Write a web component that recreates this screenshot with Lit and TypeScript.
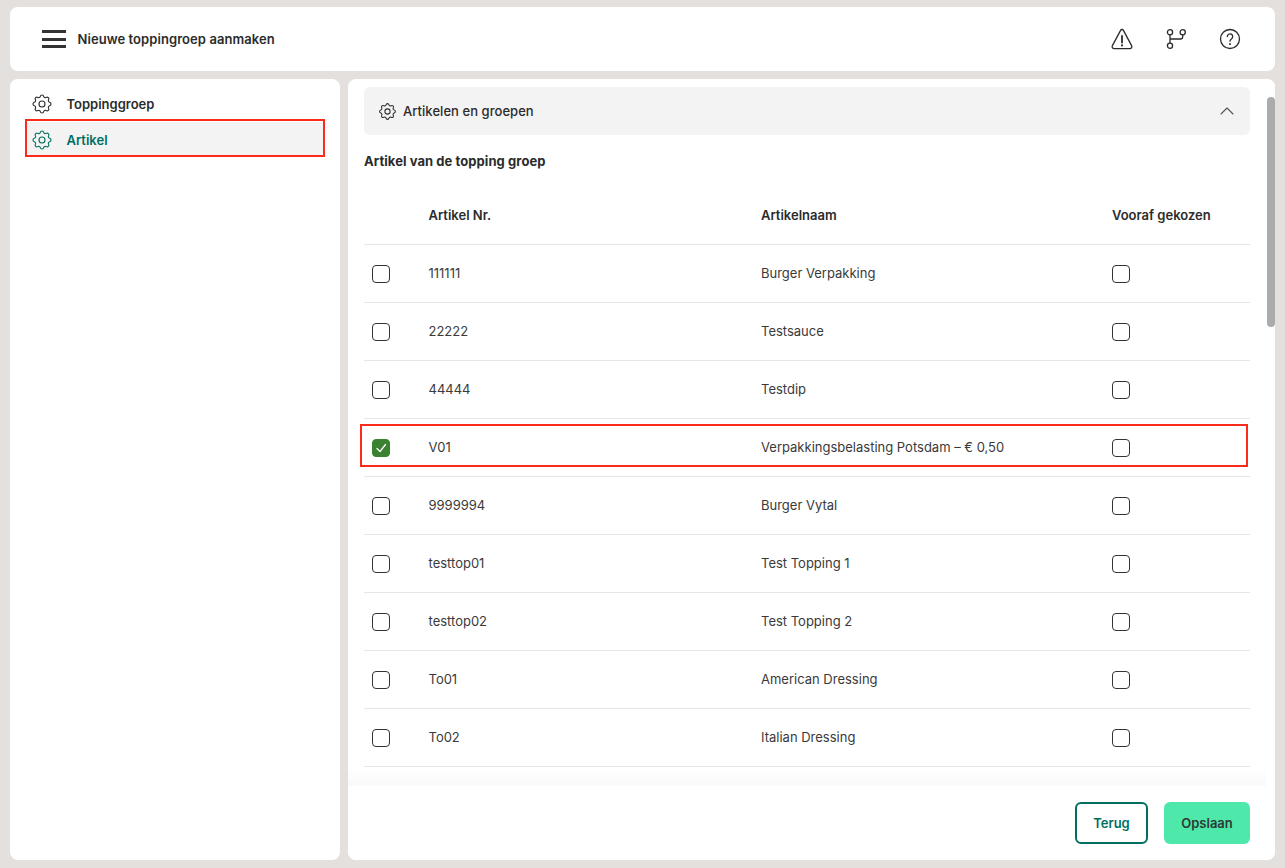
import { LitElement, html, css, svg } from "lit";
import { customElement } from "lit/decorators.js";

const rows = [
  ["111111", "Burger Verpakking"],
  ["22222", "Testsauce"],
  ["44444", "Testdip"],
  ["V01", "Verpakkingsbelasting Potsdam – € 0,50"],
  ["9999994", "Burger Vytal"],
  ["testtop01", "Test Topping 1"],
  ["testtop02", "Test Topping 2"],
  ["To01", "American Dressing"],
  ["To02", "Italian Dressing"],
];

const gear = svg`<path d="M10.325 4.317c.426-1.756 2.924-1.756 3.35 0a1.724 1.724 0 0 0 2.573 1.066c1.543-.94 3.31.826 2.37 2.37a1.724 1.724 0 0 0 1.065 2.572c1.756.426 1.756 2.924 0 3.35a1.724 1.724 0 0 0-1.066 2.573c.94 1.543-.826 3.31-2.37 2.37a1.724 1.724 0 0 0-2.572 1.065c-.426 1.756-2.924 1.756-3.35 0a1.724 1.724 0 0 0-2.573-1.066c-1.543.94-3.31-.826-2.37-2.37a1.724 1.724 0 0 0-1.065-2.572c-1.756-.426-1.756-2.924 0-3.35a1.724 1.724 0 0 0 1.066-2.573c-.94-1.543.826-3.31 2.37-2.37 1 .608 2.296.07 2.572-1.065z"/><circle cx="12" cy="12" r="3"/>`;

@customElement("app-root")
export class AppRoot extends LitElement {
  static styles = css`
    :host {
      display: block;
      height: 868px;
      background: #e3e0de;
      font-family: Inter, "Liberation Sans", sans-serif;
      color: #2b2b2b;
      overflow: hidden;
    }
    svg {
      fill: none;
      stroke: currentColor;
      stroke-linecap: round;
      stroke-linejoin: round;
      display: block;
      flex: none;
    }
    .page {
      height: 868px;
      box-sizing: border-box;
      padding: 7px 10px 8px;
      display: flex;
      flex-direction: column;
      gap: 8px;
    }
    .topbar {
      height: 64px;
      flex: none;
      background: #fff;
      border-radius: 8px;
      display: flex;
      align-items: center;
      padding: 0 32px;
      box-sizing: border-box;
    }
    .burger {
      width: 24px;
      height: 18px;
      display: flex;
      flex-direction: column;
      justify-content: space-between;
      margin-right: 12px;
    }
    .burger span {
      height: 3px;
      background: #333;
    }
    .title {
      font-size: 13px;
      font-weight: 600;
      letter-spacing: 0.07px;
      margin-left: -0.5px;
      flex: 1;
    }
    .actions {
      display: flex;
      gap: 30px;
      margin-right: 1px;
    }
    .actions svg {
      width: 24px;
      height: 24px;
      stroke-width: 1.3;
    }
    .body {
      flex: 1;
      min-height: 0;
      display: flex;
      gap: 8px;
    }
    .side {
      width: 330px;
      flex: none;
      background: #fff;
      border-radius: 8px;
      box-sizing: border-box;
      padding: 7px 17px;
      display: flex;
      flex-direction: column;
      gap: 3px;
    }
    .nav {
      height: 33px;
      box-sizing: border-box;
      padding: 2px 0 0 3px;
      display: flex;
      align-items: center;
      gap: 12.5px;
      font-size: 13px;
      font-weight: 600;
      border-radius: 3px;
      position: relative;
    }
    .nav svg {
      width: 24px;
      height: 24px;
      stroke-width: 1.1;
    }
    .nav.active {
      background: #f3f3f3;
      color: #006f5f;
    }
    .nav.active::after {
      content: "";
      position: absolute;
      inset: -3px -2px -2px -2px;
      border: 2px solid #fb2a1a;
    }
    .main {
      flex: 1;
      min-width: 0;
      background: #fff;
      border-radius: 8px;
      display: flex;
      flex-direction: column;
      overflow: hidden;
      position: relative;
    }
    .scroll {
      flex: 1;
      min-height: 0;
      overflow: hidden;
      padding: 8px 25px 0 16px;
      position: relative;
    }
    .scroll::after {
      content: "";
      position: absolute;
      left: 0;
      right: 9px;
      bottom: 0;
      height: 18px;
      background: linear-gradient(rgba(255, 255, 255, 0), rgba(245, 245, 245, 0.6));
    }
    .bar {
      position: absolute;
      top: 0;
      right: 0;
      bottom: 0;
      width: 9px;
      background: #fff;
    }
    .thumb {
      margin-top: 18px;
      height: 230px;
      width: 8px;
      margin-left: 1px;
      border-radius: 4px;
      background: #ababab;
    }
    .accordion {
      height: 48px;
      background: #f3f3f3;
      border-radius: 6px;
      display: flex;
      align-items: center;
      padding: 0 16px 0 13px;
      gap: 5px;
      font-size: 13px;
      font-weight: 500;
      letter-spacing: 0.05px;
    }
    .accordion svg.cog {
      width: 21px;
      height: 21px;
      stroke-width: 1.2;
    }
    .accordion span {
      flex: 1;
    }
    .accordion svg.chev {
      width: 14px;
      height: 14px;
      stroke: #555;
      stroke-width: 1.1;
    }
    h3 {
      margin: 18px 0 0;
      font-size: 13px;
      line-height: 16px;
      font-weight: 700;
      letter-spacing: 0.07px;
    }
    .row {
      display: grid;
      grid-template-columns: 64.5px 332.5px 351px 1fr;
      align-items: center;
      height: 58px;
      box-sizing: border-box;
      border-bottom: 1px solid #e6e6e6;
      font-size: 13px;
      position: relative;
      color: #3a3a3a;
    }
    .row.head {
      margin-top: 18px;
      font-weight: 600;
      color: #2b2b2b;
    }
    .cell {
      padding-bottom: 2px;
    }
    .box {
      width: 18px;
      height: 18px;
      box-sizing: border-box;
      border: 1.5px solid #333;
      border-radius: 4px;
      margin-left: 8px;
      background: #fff;
    }
    .cols .box {
      margin-left: 0;
    }
    .box.checked {
      background: #3a8230;
      border-color: #3a8230;
      display: flex;
      align-items: center;
      justify-content: center;
    }
    .box.checked svg {
      width: 12px;
      height: 12px;
      stroke: #fff;
      stroke-width: 1.3;
    }
    .mark {
      position: absolute;
      left: -4px;
      right: 2px;
      top: 5px;
      bottom: 9px;
      border: 2px solid #fb2a1a;
      pointer-events: none;
    }
    .foot {
      height: 74px;
      flex: none;
      background: #fff;
      display: flex;
      justify-content: flex-end;
      align-items: flex-start;
      gap: 16px;
      padding: 16px 25px 0 0;
      box-sizing: border-box;
    }
    button {
      height: 42px;
      border-radius: 6px;
      font: 600 13px Inter, "Liberation Sans", sans-serif;
      padding: 0;
      box-sizing: border-box;
    }
    .back {
      width: 73px;
      background: #fff;
      color: #006f5f;
      border: 2px solid #006f5f;
    }
    .save {
      width: 86px;
      background: #4fe8ab;
      color: #2b3a35;
      border: none;
    }
  `;

  render() {
    return html`
      <div class="page">
        <header class="topbar">
          <div class="burger"><span></span><span></span><span></span></div>
          <div class="title">Nieuwe toppingroep aanmaken</div>
          <div class="actions">
            <svg viewBox="0 0 24 24">
              <path d="M10.6 3.4 2.4 18.6c-.8 1.500.2 3 1.800 3h15.600c1.600 0 2.600-1.500 1.800-3L13.400 3.400c-.6-1.200-2.200-1.200-2.800 0z" />
              <path d="M12 9v6.500" stroke-width="1.800" />
              <path d="M12 18.300v.2" stroke-width="2" />
            </svg>
            <svg viewBox="0 0 24 24">
              <circle cx="6" cy="5.200" r="2.600" />
              <circle cx="18.700" cy="5.200" r="2.600" />
              <circle cx="6" cy="18.700" r="2.600" />
              <path d="M6 7.800v8.300M6 12h10.500c1.300 0 2.200-.9 2.200-2.200v-2" />
            </svg>
            <svg viewBox="0 0 24 24">
              <circle cx="12" cy="12" r="9.500" />
              <path d="M9.300 9.500a2.700 2.700 0 1 1 4.300 2.200c-1 .7-1.600 1.200-1.600 2.500" />
              <path d="M12 17v.2" stroke-width="1.800" />
            </svg>
          </div>
        </header>
        <div class="body">
          <nav class="side">
            <div class="nav"><svg viewBox="0 0 24 24">${gear}</svg>Toppinggroep</div>
            <div class="nav active"><svg viewBox="0 0 24 24">${gear}</svg>Artikel</div>
          </nav>
          <main class="main">
            <div class="scroll">
              <div class="accordion">
                <svg class="cog" viewBox="0 0 24 24">${gear}</svg>
                <span>Artikelen en groepen</span>
                <svg class="chev" viewBox="0 0 14 14"><path d="M1 10l6-6 6 6" /></svg>
              </div>
              <h3>Artikel van de topping groep</h3>
              <div class="row head">
                <div></div>
                <div class="cell">Artikel Nr.</div>
                <div class="cell">Artikelnaam</div>
                <div class="cell">Vooraf gekozen</div>
              </div>
              ${rows.map(
                ([nr, name]) => html`
                  <div class="row">
                    ${nr === "V01"
                      ? html`<div class="box checked">
                            <svg viewBox="0 0 12 12"><path d="M2 6.500 5 9.500l5.500-7" /></svg>
                          </div>
                          <div class="mark"></div>`
                      : html`<div class="box"></div>`}
                    <div class="cell">${nr}</div>
                    <div class="cell">${name}</div>
                    <div class="cols"><div class="box"></div></div>
                  </div>
                `
              )}
            </div>
            <div class="bar"><div class="thumb"></div></div>
            <footer class="foot">
              <button class="back">Terug</button>
              <button class="save">Opslaan</button>
            </footer>
          </main>
        </div>
      </div>
    `;
  }
}
